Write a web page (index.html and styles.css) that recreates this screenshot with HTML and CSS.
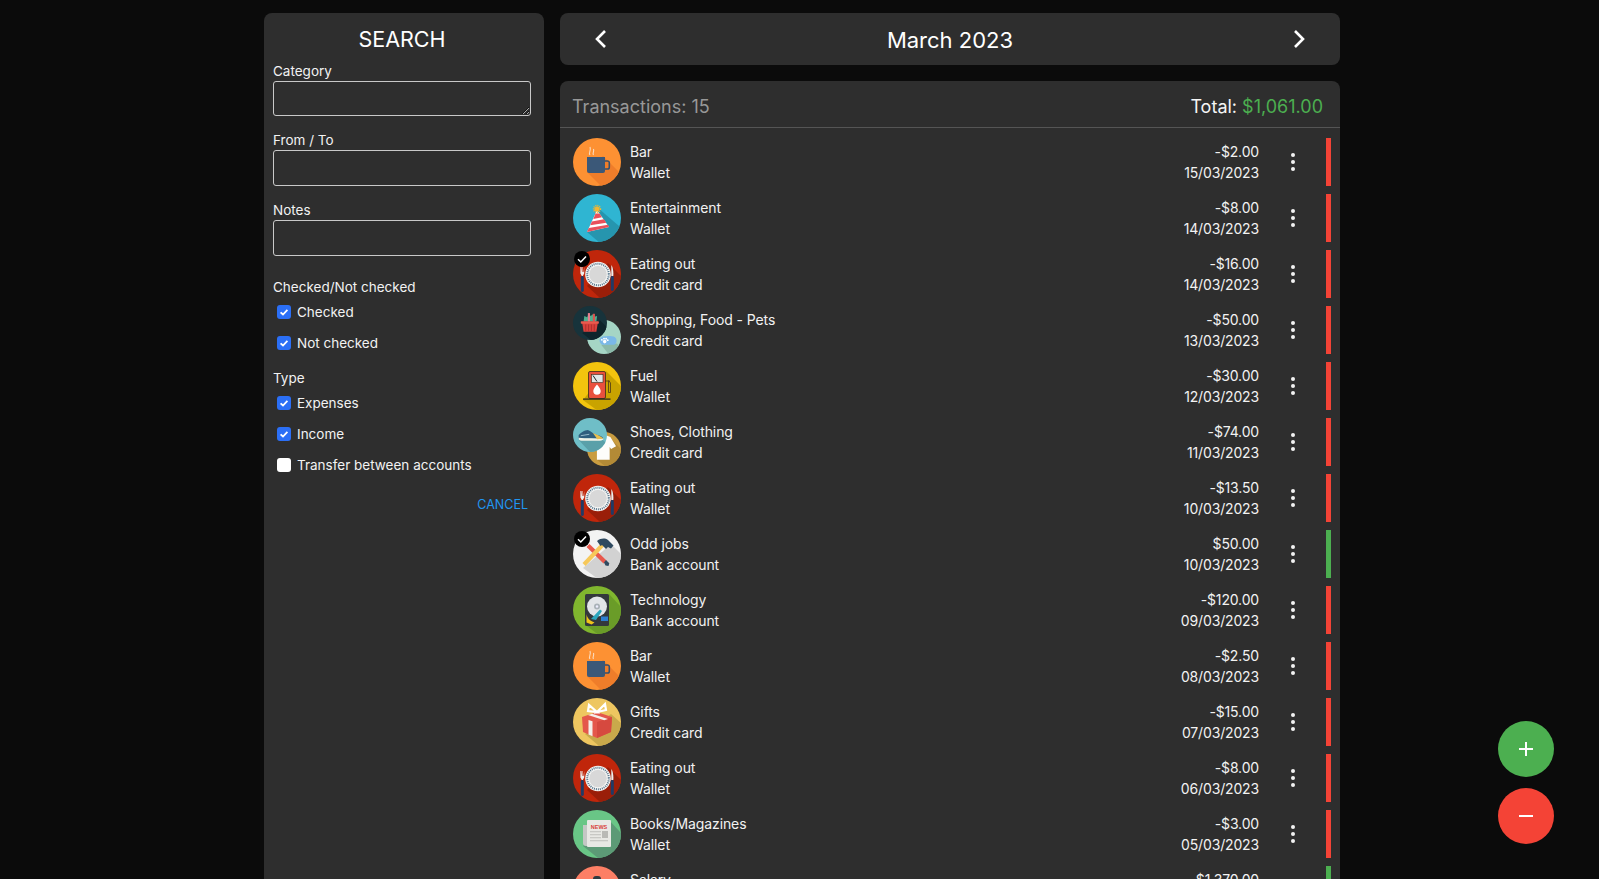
FILE: index.html
```html
<!DOCTYPE html>
<html lang="en">
<head>
    <meta charset="UTF-8">
    <meta name="viewport" content="width=device-width, initial-scale=1.0">
    <title>Transactions</title>
    <link rel="stylesheet" href="styles.css">
</head>
<body>
    <svg class="sprites" width="0" height="0" aria-hidden="true">
        <defs>
            <clipPath id="disc"><circle cx="24" cy="24" r="24"/></clipPath>

            <symbol id="ic-bar" viewBox="0 0 48 48">
                <circle cx="24" cy="24" r="24" fill="#fd9133"/>
                <polygon points="30,18 60,48 40,60 14,34" fill="#ef7d2a" clip-path="url(#disc)"/>
                <path d="M31 23h3.500a1.800 1.800 0 0 1 1.800 1.800v4.400a1.800 1.800 0 0 1-1.800 1.800H31" fill="none" stroke="#34506f" stroke-width="1.600"/>
                <path d="M14 19h18v14a2 2 0 0 1-2 2H16a2 2 0 0 1-2-2z" fill="#3b5878"/>
                <path d="M17 17c-2-2.500 1.500-4 0-8M20.500 17c-1.500-2 1-3 0-6" fill="none" stroke="#f9dcc0" stroke-width="1.100"/>
            </symbol>

            <symbol id="ic-party" viewBox="0 0 48 48">
                <circle cx="24" cy="24" r="24" fill="#2fb5d2"/>
                <polygon points="25,14 60,44 40,60 14,38" fill="#2695ae" clip-path="url(#disc)"/>
                <polygon points="24,16 36,33 14,38" fill="#fff"/>
                <polygon points="22.500,19.500 26.500,19.600 29,23.300 20.300,25" fill="#e8505b"/>
                <polygon points="18.900,27.500 31,25.300 33.300,28.700 17.300,31.300" fill="#e8505b"/>
                <polygon points="15.800,34 35,30.700 36,33 14,38" fill="#e8505b"/>
                <circle cx="24" cy="15" r="2.600" fill="#f2b632"/>
                <circle cx="24" cy="15" r="3.400" fill="none" stroke="#f2b632" stroke-width="1.600" stroke-dasharray="1 1"/>
            </symbol>

            <symbol id="ic-eat" viewBox="0 0 48 48">
                <circle cx="24" cy="24" r="24" fill="#c0260b"/>
                <polygon points="35,13 60,38 40,60 14,36" fill="#9a1e09" clip-path="url(#disc)"/>
                <circle cx="25" cy="24.500" r="12.800" fill="#f6f6f4"/>
                <circle cx="25" cy="24.500" r="10.800" fill="none" stroke="#56758c" stroke-width="2" stroke-dasharray="1 1"/>
                <circle cx="25" cy="24.500" r="8.800" fill="#d8d8d8"/>
                <rect x="7.800" y="26" width="3" height="16" rx="1.400" fill="#1f3b66"/>
                <path d="M7.400 17v6.500l1.400 2.500h1l1.400-2.500V17l-.7 5h-.5v-5h-.5v5h-.5l-.5-5z" fill="#eee"/>
                <rect x="37.800" y="26" width="3" height="15" rx="1.400" fill="#1f3b66"/>
                <path d="M38.300 26V15c1.700 2 2.300 7 2 11z" fill="#eee"/>
            </symbol>

            <symbol id="ic-shop" viewBox="0 0 48 48">
                <circle cx="24" cy="24" r="24" fill="#17333b"/>
                <polygon points="38,20 60,42 40,60 13,38" fill="#0f252c" clip-path="url(#disc)"/>
                <path d="M15 22l1-8 4 2 2-5 3 3 4-3 1 4 4-1-1 8z" fill="#4fae8f"/>
                <rect x="21" y="10" width="3" height="12" fill="#e77f8e"/>
                <rect x="28" y="11" width="3" height="11" fill="#d9534f"/>
                <path d="M13 24h22l-2 12.500H15z" fill="#d8413c"/>
                <rect x="11" y="21.500" width="25.500" height="3.500" rx="1" fill="#ea5a4e"/>
                <path d="M18 26v9M22 26v9M26 26v9M30 26v9" stroke="#a82c29" stroke-width="1.200"/>
            </symbol>

            <symbol id="ic-pets" viewBox="0 0 48 48">
                <circle cx="24" cy="24" r="24" fill="#a5d5c5"/>
                <polygon points="20,35 42,33 60,50 40,60" fill="#8bb9a9" clip-path="url(#disc)"/>
                <path d="M18 27c2-4 5-4 9-4 5-1 12-1 14 3 2 4 0 9-4 9H22c-3-1-5-5-4-8z" fill="#7ab8e8"/>
                <circle cx="25" cy="30.500" r="2.500" fill="#fff"/>
                <circle cx="21" cy="28" r="1.300" fill="#fff"/>
                <circle cx="24" cy="26.300" r="1.300" fill="#fff"/>
                <circle cx="27" cy="26.500" r="1.300" fill="#fff"/>
                <circle cx="29.300" cy="28.500" r="1.300" fill="#fff"/>
            </symbol>

            <symbol id="ic-fuel" viewBox="0 0 48 48">
                <circle cx="24" cy="24" r="24" fill="#f3c40e"/>
                <polygon points="33,9 60,36 40,60 10,38" fill="#c9a300" clip-path="url(#disc)"/>
                <rect x="15.500" y="9.500" width="17" height="27" rx="1.500" fill="#e9503d" stroke="#3a2a1a" stroke-width=".8"/>
                <rect x="18.500" y="12.500" width="11.500" height="8" fill="#dfe6e6" stroke="#3a2a1a" stroke-width=".6"/>
                <path d="M20 13.500l4 6" stroke="#222" stroke-width="1"/>
                <path d="M24 22.500c2.500 3.200 3.700 4.700 3.700 6.500a3.700 3.700 0 0 1-7.400 0c0-1.800 1.200-3.300 3.700-6.500z" fill="#fff"/>
                <path d="M32.500 19h3v11.500h2V21l-2-3" fill="none" stroke="#3a2a1a" stroke-width=".7"/>
                <rect x="10" y="36.500" width="27.500" height="1.200" fill="#222"/>
            </symbol>

            <symbol id="ic-shoes" viewBox="0 0 48 48">
                <circle cx="24" cy="24" r="24" fill="#6fbec7"/>
                <polygon points="8,31 42,31 60,46 40,60 22,46" fill="#5aa0a9" clip-path="url(#disc)"/>
                <path d="M8 24c3-3 8-7 13-7 5 2 8 6 13 7 4 1 8 2 9 5H8z" fill="#2f5e7e"/>
                <path d="M8 28c10 1 24 1 35 1 0 2-2 3-5 3H12c-3 0-4-1-4-4z" fill="#f2f2e6"/>
                <path d="M28 21c4 2 11 4 15 8l-9 1c-1-3-4-6-6-9z" fill="#e9c04f"/>
                <path d="M11 25l12-2" stroke="#a9cbd8" stroke-width="1.200"/>
            </symbol>

            <symbol id="ic-shirt" viewBox="0 0 48 48">
                <circle cx="24" cy="24" r="24" fill="#c99c40"/>
                <polygon points="32,8 60,36 40,60 14,39" fill="#b38a36" clip-path="url(#disc)"/>
                <path d="M6 7l9-3c2 3 8 3 10 0l8 3 8 13-7 4-2-3v18H14V20l-3 1z" fill="#fdfdfb"/>
            </symbol>

            <symbol id="ic-tools" viewBox="0 0 48 48">
                <circle cx="24" cy="24" r="24" fill="#f3f3f3"/>
                <polygon points="38,14 60,36 40,60 10,38" fill="#d2d2d2" clip-path="url(#disc)"/>
                <path d="M13.500 17l3-3L33.500 30.500l-3 3z" fill="#e8584c"/>
                <path d="M33 30l3.300 3.300-.8 2.700-3-.5-1.500-3z" fill="#2f4a60"/>
                <path d="M28 13.500l3 3L12.500 36l-3-3z" fill="#f6c85a"/>
                <path d="M24 11c4-3 8-3 11-1l5.500 5.500-2.500 3-3-1.500-2 2-4-4-1.500 1z" fill="#2f4a60"/>
            </symbol>

            <symbol id="ic-hdd" viewBox="0 0 48 48">
                <circle cx="24" cy="24" r="24" fill="#80b62e"/>
                <polygon points="36,8 60,34 40,60 14,40" fill="#6a9c28" clip-path="url(#disc)"/>
                <rect x="12" y="8" width="24" height="32" rx="1.500" fill="#33383c"/>
                <circle cx="24" cy="20.500" r="10" fill="#e2e5e8"/>
                <circle cx="24" cy="20.500" r="3" fill="#a9b2b8"/>
                <circle cx="24" cy="20.500" r="1.200" fill="#eef"/>
                <path d="M18 33l9-9.500 2 1.500-6 9z" fill="#2ba6bd"/>
                <path d="M13.500 28c.5 4 3.500 7 8 8.500l-3 2-5-2z" fill="#f0c419"/>
                <rect x="28" y="30.500" width="7" height="4.500" fill="#2d7fd0"/>
            </symbol>

            <symbol id="ic-gift" viewBox="0 0 48 48">
                <circle cx="24" cy="24" r="24" fill="#eec660"/>
                <polygon points="38,16 60,36 40,60 12,36" fill="#c9a94b" clip-path="url(#disc)"/>
                <path d="M9 19l15-5 15 5-1 15-14 6-14-6z" fill="#e4574b"/>
                <path d="M24 24l15-5-1 15-14 6z" fill="#d6493f"/>
                <path d="M15 17l4-1.300 16 5.300-3.800 1.200z" fill="#f4efe9"/>
                <path d="M15.500 22l4 1.300v15l-4-1.700z" fill="#f4efe9"/>
                <path d="M24 14L16 7l-1 6zM24 14l8-8 1 6z" fill="none" stroke="#fff" stroke-width="2.200"/>
            </symbol>

            <symbol id="ic-news" viewBox="0 0 48 48">
                <circle cx="24" cy="24" r="24" fill="#69c686"/>
                <polygon points="36,10 60,36 40,60 10,36" fill="#5c9a76" clip-path="url(#disc)"/>
                <path d="M10 15h5v21h-2c-2 0-3-1-3-3z" fill="#c4c7c4"/>
                <rect x="14" y="10" width="24" height="27" rx="1" fill="#e8e8e4"/>
                <text class="news-word" x="26" y="18.500" text-anchor="middle">NEWS</text>
                <rect x="17" y="21" width="11" height="1.300" fill="#c8c8c4"/>
                <rect x="17" y="24" width="11" height="1.300" fill="#c8c8c4"/>
                <rect x="17" y="27" width="11" height="1.300" fill="#c8c8c4"/>
                <rect x="17" y="30" width="18" height="1.300" fill="#c8c8c4"/>
                <rect x="29" y="21" width="6" height="7" fill="#b9b9b5"/>
            </symbol>

            <symbol id="ic-salary" viewBox="0 0 48 48">
                <circle cx="24" cy="24" r="24" fill="#fd7f65"/>
                <rect x="20" y="10" width="8" height="26" rx="3" fill="#2f3a40"/>
            </symbol>
        </defs>
    </svg>

    <div class="container">
        <aside class="card search">
            <h2 class="search-title">SEARCH</h2>

            <label class="field-label" for="category">Category</label>
            <textarea class="field field-area" id="category"></textarea>

            <label class="field-label" for="fromTo">From / To</label>
            <input class="field" type="text" id="fromTo">

            <label class="field-label" for="notes">Notes</label>
            <input class="field" type="text" id="notes">

            <div class="group-label group-first">Checked/Not checked</div>
            <label class="check"><input type="checkbox" checked>Checked</label>
            <label class="check"><input type="checkbox" checked>Not checked</label>

            <div class="group-label">Type</div>
            <label class="check"><input type="checkbox" checked>Expenses</label>
            <label class="check"><input type="checkbox" checked>Income</label>
            <label class="check"><input type="checkbox">Transfer between accounts</label>

            <div class="search-actions">
                <button class="link-btn">CANCEL</button>
            </div>
        </aside>

        <main class="main">
            <div class="card month-nav">
                <button class="nav-btn" aria-label="Previous month">
                    <svg width="24" height="24" viewBox="0 0 24 24"><path d="M16 4l-8 8 8 8" fill="none" stroke="#fff" stroke-width="2.600"/></svg>
                </button>
                <h1 class="month-title">March 2023</h1>
                <button class="nav-btn" aria-label="Next month">
                    <svg width="24" height="24" viewBox="0 0 24 24"><path d="M8 4l8 8-8 8" fill="none" stroke="#fff" stroke-width="2.600"/></svg>
                </button>
            </div>

            <section class="card list">
                <header class="list-head">
                    <span class="list-count">Transactions: 15</span>
                    <span class="list-total">Total: <b>$1,061.00</b></span>
                </header>

                <ul class="rows">
                    <li class="row">
                        <div class="avatar"><svg class="ic"><use href="#ic-bar"/></svg></div>
                        <div class="info"><div>Bar</div><div>Wallet</div></div>
                        <div class="amount"><div>-$2.00</div><div>15/03/2023</div></div>
                        <div class="dots"><i></i><i></i><i></i></div>
                        <div class="bar out"></div>
                    </li>
                    <li class="row">
                        <div class="avatar"><svg class="ic"><use href="#ic-party"/></svg></div>
                        <div class="info"><div>Entertainment</div><div>Wallet</div></div>
                        <div class="amount"><div>-$8.00</div><div>14/03/2023</div></div>
                        <div class="dots"><i></i><i></i><i></i></div>
                        <div class="bar out"></div>
                    </li>
                    <li class="row">
                        <div class="avatar"><svg class="ic"><use href="#ic-eat"/></svg><span class="badge"><svg width="16" height="16" viewBox="0 0 16 16"><path d="M4 8.300l2.800 2.700L12 5.500" fill="none" stroke="#fff" stroke-width="1.500"/></svg></span></div>
                        <div class="info"><div>Eating out</div><div>Credit card</div></div>
                        <div class="amount"><div>-$16.00</div><div>14/03/2023</div></div>
                        <div class="dots"><i></i><i></i><i></i></div>
                        <div class="bar out"></div>
                    </li>
                    <li class="row">
                        <div class="avatar"><svg class="ic-back"><use href="#ic-pets"/></svg><svg class="ic-front"><use href="#ic-shop"/></svg></div>
                        <div class="info"><div>Shopping, Food - Pets</div><div>Credit card</div></div>
                        <div class="amount"><div>-$50.00</div><div>13/03/2023</div></div>
                        <div class="dots"><i></i><i></i><i></i></div>
                        <div class="bar out"></div>
                    </li>
                    <li class="row">
                        <div class="avatar"><svg class="ic"><use href="#ic-fuel"/></svg></div>
                        <div class="info"><div>Fuel</div><div>Wallet</div></div>
                        <div class="amount"><div>-$30.00</div><div>12/03/2023</div></div>
                        <div class="dots"><i></i><i></i><i></i></div>
                        <div class="bar out"></div>
                    </li>
                    <li class="row">
                        <div class="avatar"><svg class="ic-back"><use href="#ic-shirt"/></svg><svg class="ic-front"><use href="#ic-shoes"/></svg></div>
                        <div class="info"><div>Shoes, Clothing</div><div>Credit card</div></div>
                        <div class="amount"><div>-$74.00</div><div>11/03/2023</div></div>
                        <div class="dots"><i></i><i></i><i></i></div>
                        <div class="bar out"></div>
                    </li>
                    <li class="row">
                        <div class="avatar"><svg class="ic"><use href="#ic-eat"/></svg></div>
                        <div class="info"><div>Eating out</div><div>Wallet</div></div>
                        <div class="amount"><div>-$13.50</div><div>10/03/2023</div></div>
                        <div class="dots"><i></i><i></i><i></i></div>
                        <div class="bar out"></div>
                    </li>
                    <li class="row">
                        <div class="avatar"><svg class="ic"><use href="#ic-tools"/></svg><span class="badge"><svg width="16" height="16" viewBox="0 0 16 16"><path d="M4 8.300l2.800 2.700L12 5.500" fill="none" stroke="#fff" stroke-width="1.500"/></svg></span></div>
                        <div class="info"><div>Odd jobs</div><div>Bank account</div></div>
                        <div class="amount"><div>$50.00</div><div>10/03/2023</div></div>
                        <div class="dots"><i></i><i></i><i></i></div>
                        <div class="bar in"></div>
                    </li>
                    <li class="row">
                        <div class="avatar"><svg class="ic"><use href="#ic-hdd"/></svg></div>
                        <div class="info"><div>Technology</div><div>Bank account</div></div>
                        <div class="amount"><div>-$120.00</div><div>09/03/2023</div></div>
                        <div class="dots"><i></i><i></i><i></i></div>
                        <div class="bar out"></div>
                    </li>
                    <li class="row">
                        <div class="avatar"><svg class="ic"><use href="#ic-bar"/></svg></div>
                        <div class="info"><div>Bar</div><div>Wallet</div></div>
                        <div class="amount"><div>-$2.50</div><div>08/03/2023</div></div>
                        <div class="dots"><i></i><i></i><i></i></div>
                        <div class="bar out"></div>
                    </li>
                    <li class="row">
                        <div class="avatar"><svg class="ic"><use href="#ic-gift"/></svg></div>
                        <div class="info"><div>Gifts</div><div>Credit card</div></div>
                        <div class="amount"><div>-$15.00</div><div>07/03/2023</div></div>
                        <div class="dots"><i></i><i></i><i></i></div>
                        <div class="bar out"></div>
                    </li>
                    <li class="row">
                        <div class="avatar"><svg class="ic"><use href="#ic-eat"/></svg></div>
                        <div class="info"><div>Eating out</div><div>Wallet</div></div>
                        <div class="amount"><div>-$8.00</div><div>06/03/2023</div></div>
                        <div class="dots"><i></i><i></i><i></i></div>
                        <div class="bar out"></div>
                    </li>
                    <li class="row">
                        <div class="avatar"><svg class="ic"><use href="#ic-news"/></svg></div>
                        <div class="info"><div>Books/Magazines</div><div>Wallet</div></div>
                        <div class="amount"><div>-$3.00</div><div>05/03/2023</div></div>
                        <div class="dots"><i></i><i></i><i></i></div>
                        <div class="bar out"></div>
                    </li>
                    <li class="row">
                        <div class="avatar"><svg class="ic"><use href="#ic-salary"/></svg></div>
                        <div class="info"><div>Salary</div><div>Bank account</div></div>
                        <div class="amount"><div>$1,370.00</div><div>01/03/2023</div></div>
                        <div class="dots"><i></i><i></i><i></i></div>
                        <div class="bar in"></div>
                    </li>
                </ul>
            </section>
        </main>
    </div>

    <button class="fab fab-add" aria-label="Add income">
        <svg width="24" height="24" viewBox="0 0 24 24"><path d="M12 5v14M5 12h14" stroke="#fff" stroke-width="2"/></svg>
    </button>
    <button class="fab fab-sub" aria-label="Add expense">
        <svg width="24" height="24" viewBox="0 0 24 24"><path d="M5 12h14" stroke="#fff" stroke-width="2"/></svg>
    </button>
</body>
</html>
```

FILE: styles.css
```css
html, body {
    height: 100%;
    overflow: hidden;
}
body {
    margin: 0;
    background-color: #0b0b0b;
    color: #f2f2f2;
    font-family: Inter, "Liberation Sans", sans-serif;
    font-size: 14px;
    line-height: 21px;
}
.sprites {
    position: absolute;
}
.container {
    display: flex;
    align-items: stretch;
    gap: 16px;
    width: 1076px;
    margin-left: 264px;
    padding-top: 13px;
}
.card {
    background-color: #2e2e2e;
    border-radius: 8px;
}

/* search panel */
.search {
    display: flex;
    flex-direction: column;
    flex: 0 0 280px;
    box-sizing: border-box;
    padding: 9px 13px 0 9px;
    font-size: 13.500px;
}
.search-title {
    margin: 0 0 4px;
    font-size: 21.500px;
    line-height: 34px;
    font-weight: 400;
    text-align: center;
    color: #fff;
}
.field-label {
    display: block;
    height: 21px;
    line-height: 23px;
}
.field {
    display: block;
    box-sizing: border-box;
    width: 258px;
    height: 36px;
    margin: 0 0 13px;
    padding: 4px 8px;
    background: transparent;
    border: 1px solid #c9c9c9;
    border-radius: 3px;
    color: #fff;
    font: inherit;
    outline: none;
}
.field-area {
    height: 35px;
    margin-bottom: 13px;
}
.group-label {
    height: 20px;
    margin-top: 9px;
    line-height: 23px;
}
.group-first {
    margin-top: 7px;
}
.check {
    display: flex;
    align-items: center;
    gap: 6px;
    box-sizing: border-box;
    height: 31px;
    padding: 2px 0 0 4px;
}
.check input {
    appearance: none;
    flex: none;
    width: 14px;
    height: 14px;
    margin: 0 0 2px;
    background-color: #fff;
    border-radius: 3px;
}
.check input:checked {
    background: #2b6ff6 url("data:image/svg+xml,%3Csvg xmlns='http://www.w3.org/2000/svg' viewBox='0 0 14 14'%3E%3Cpath d='M3.600 7.300l2.400 2.200 4.400-4.600' fill='none' stroke='%23fff' stroke-width='1.800'/%3E%3C/svg%3E") center/14px no-repeat;
}
.search-actions {
    display: flex;
    justify-content: flex-end;
    margin-top: 10px;
}
.link-btn {
    padding: 4px 3px;
    background: none;
    border: none;
    color: #2196f3;
    font: inherit;
    font-size: 12.500px;
    cursor: pointer;
}

/* month bar */
.main {
    flex: 0 0 780px;
    display: flex;
    flex-direction: column;
    gap: 16px;
}
.month-nav {
    display: flex;
    align-items: center;
    justify-content: space-between;
    height: 52px;
    padding: 0 29px;
    box-sizing: border-box;
}
.month-title {
    margin: 0;
    padding-top: 2px;
    font-size: 22px;
    line-height: 50px;
    font-weight: 400;
    color: #fff;
}
.nav-btn {
    display: flex;
    padding: 0;
    background: none;
    border: none;
    cursor: pointer;
}

/* transaction list */
.list-head {
    display: flex;
    align-items: center;
    justify-content: space-between;
    box-sizing: border-box;
    height: 47px;
    padding: 4px 17px 0 12px;
    border-bottom: 1px solid #555;
    font-size: 18px;
}
.list-count {
    color: #989898;
}
.list-total {
    color: #f5f5f5;
}
.list-total b {
    font-weight: 400;
    color: #4caf50;
}
.rows {
    display: flex;
    flex-direction: column;
    gap: 8px;
    margin: 0;
    padding: 10px 9px 24px 13px;
    list-style: none;
}
.row {
    display: flex;
    align-items: center;
    height: 48px;
}
.avatar {
    position: relative;
    flex: none;
    width: 48px;
    height: 48px;
    margin-right: 9px;
}
.ic {
    display: block;
    width: 48px;
    height: 48px;
}
.ic-front, .ic-back {
    position: absolute;
    width: 34px;
    height: 34px;
}
.ic-front {
    left: 0;
    top: 0;
}
.ic-back {
    right: 0;
    bottom: 0;
}
.news-word {
    font-family: "Liberation Sans", sans-serif;
    font-size: 5.500px;
    font-weight: 700;
    fill: #d9423c;
}
.badge {
    position: absolute;
    left: 1px;
    top: 1px;
    display: flex;
    width: 16px;
    height: 16px;
    background-color: #000;
    border-radius: 50%;
}
.info {
    flex: 1;
    letter-spacing: -0.100px;
}
.amount {
    text-align: right;
    letter-spacing: -0.150px;
}
.dots {
    display: flex;
    flex-direction: column;
    align-items: center;
    gap: 3px;
    width: 24px;
    margin-left: 22px;
    margin-right: 21px;
}
.dots i {
    width: 4px;
    height: 4px;
    background-color: #f2f2f2;
    border-radius: 50%;
}
.bar {
    flex: none;
    width: 5px;
    height: 48px;
}
.bar.out {
    background-color: #f44336;
}
.bar.in {
    background-color: #4caf50;
}

/* floating buttons */
.fab {
    position: fixed;
    left: 1498px;
    display: flex;
    align-items: center;
    justify-content: center;
    width: 56px;
    height: 56px;
    padding: 0;
    border: none;
    border-radius: 50%;
    cursor: pointer;
}
.fab-add {
    top: 721px;
    background-color: #4caf50;
}
.fab-sub {
    top: 788px;
    background-color: #f44336;
}
```
